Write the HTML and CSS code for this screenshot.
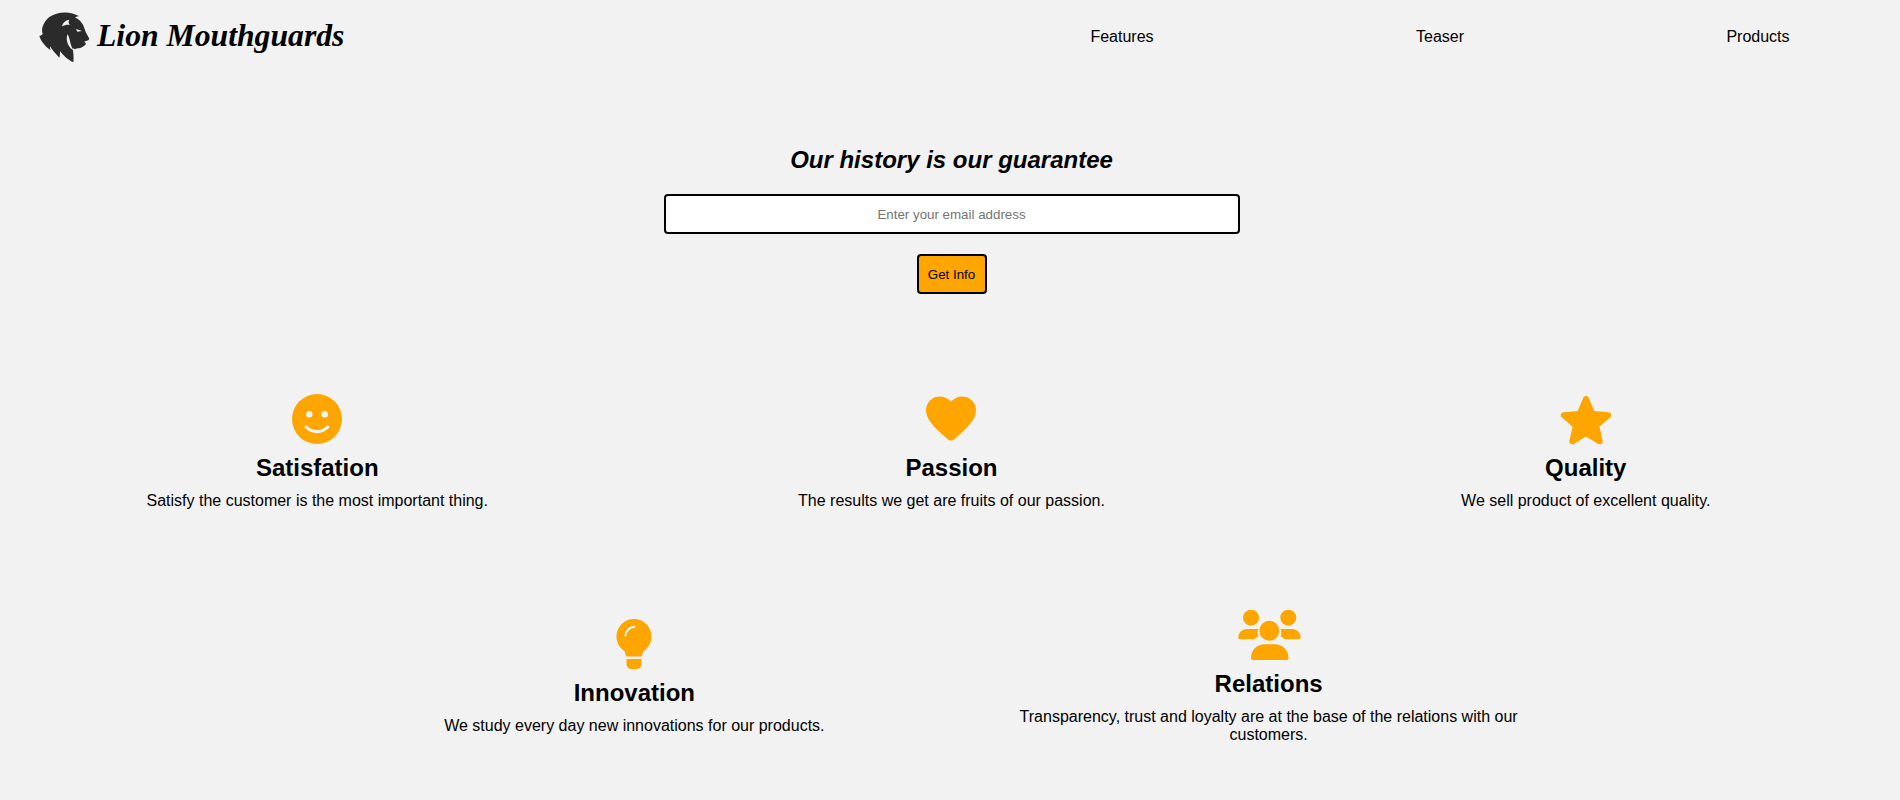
FILE: index.html
```html
<!DOCTYPE html>
<html lang="en">
<head>
    <meta charset="UTF-8">
    <title>Lion Mouthguards</title>
    <link rel="stylesheet" href="styles.css">
</head>
<body>
<header class="header">
    <a class="logo" href="#">
        <svg class="logo_img" viewBox="0 0 210 180">
            <path fill="#2b2b2b" d="M58 36C80 20 120 16 148 34C140 34 137 36 136 38C150 44 160 56 164 72C166 82 174 92 178 102C174 108 168 108 162 110C166 112 168 116 168 118C160 124 156 130 142 130C136 134 132 132 128 128C130 142 132 158 130 172C116 166 100 152 90 138C90 146 90 152 88 158C76 146 66 134 60 124C60 128 60 132 62 136C46 124 32 108 28 92C32 92 36 90 38 86C32 70 42 50 58 36Z"/>
            <path fill="#f2f2f2" d="M96 64C98 54 106 46 118 44C114 50 116 56 120 60C112 58 104 60 96 64Z"/>
            <path fill="#f2f2f2" d="M112 88C122 100 118 120 132 138C116 128 106 110 112 88Z"/>
            <path fill="#f2f2f2" d="M138 72L156 78L142 80Z"/>
        </svg>
        <span class="logo_text">Lion Mouthguards</span>
    </a>
    <ul class="nav">
        <li><a href="#features">Features</a></li>
        <li><a href="#teaser">Teaser</a></li>
        <li><a href="#products">Products</a></li>
    </ul>
</header>

<!--email form-->
<section class="hero">
    <h1>Our history is our guarantee</h1>
    <input class="email" type="email" placeholder="Enter your email address">
    <button class="btn" type="button">Get Info</button>
</section>

<!--features-->
<section class="features">
    <div class="feature">
        <svg class="icon" viewBox="0 0 24 24">
            <circle cx="12" cy="12" r="10" fill="#ffa500"/>
            <circle cx="8.900" cy="10.100" r="1.300" fill="#f2f2f2"/>
            <circle cx="15.100" cy="10.100" r="1.300" fill="#f2f2f2"/>
            <path d="M7.700 15.200c2.300 2.400 6.300 2.400 8.600 0" fill="none" stroke="#f2f2f2" stroke-width="1.300" stroke-linecap="round"/>
        </svg>
        <h2>Satisfation</h2>
        <p>Satisfy the customer is the most important thing.</p>
    </div>
    <div class="feature">
        <svg class="icon" viewBox="0 0 24 24">
            <path fill="#ffa500" d="M13.35 20.13c-.76.69-1.93.69-2.69-.01l-.11-.1C5.3 15.27 1.87 12.16 2 8.28c.06-1.7.93-3.33 2.34-4.29 2.64-1.8 5.9-.96 7.66 1.1 1.76-2.06 5.02-2.91 7.66-1.1 1.41.96 2.28 2.59 2.34 4.29.14 3.88-3.3 6.99-8.55 11.76l-.1.09z"/>
        </svg>
        <h2>Passion</h2>
        <p>The results we get are fruits of our passion.</p>
    </div>
    <div class="feature">
        <svg class="icon" viewBox="1.85 1.2 20.3 20.3">
            <path fill="#ffa500" d="M12 17.27l4.15 2.51c.76.46 1.69-.22 1.49-1.08l-1.1-4.72 3.67-3.18c.67-.58.31-1.68-.57-1.75l-4.83-.41-1.89-4.46c-.34-.81-1.5-.81-1.84 0L9.19 8.63l-4.83.41c-.88.07-1.24 1.17-.57 1.75l3.67 3.18-1.1 4.72c-.2.86.73 1.54 1.49 1.08l4.15-2.5z"/>
        </svg>
        <h2>Quality</h2>
        <p>We sell product of excellent quality.</p>
    </div>
    <div class="feature">
        <svg class="icon" viewBox="0 0 24 24">
            <path fill="#ffa500" d="M12 2C8.100 2 5 5.100 5 9c0 2.400 1.200 4.400 3 5.700.4.300.7 1.300.8 2.300h6.400c.1-1 .4-2 .8-2.300 1.800-1.300 3-3.300 3-5.700 0-3.900-3.100-7-7-7zM9 18h6v2c0 1.100-.9 2-2 2h-2c-1.100 0-2-.9-2-2z"/>
            <path d="M8.600 8.600c.1-1.900 1.700-3.400 3.600-3.500" fill="none" stroke="#f2f2f2" stroke-width=".8" stroke-linecap="round"/>
        </svg>
        <h2>Innovation</h2>
        <p>We study every day new innovations for our products.</p>
    </div>
    <div class="feature">
        <svg class="icon icon_wide" viewBox="-1 -3 66 60">
            <circle cx="14" cy="9.700" r="8" fill="#ffa500"/>
            <circle cx="51.300" cy="9.700" r="8" fill="#ffa500"/>
            <path fill="#ffa500" d="M3 31.300c-1 0-1.700-.7-1.700-1.700 0-5 3.700-8.600 8.700-8.600h11.500c-1 2-1 6 0 7.500-2 .6-3.200 1.500-4.300 2.800z"/>
            <path fill="#ffa500" d="M62 31.300c1 0 1.700-.7 1.700-1.700 0-5-3.700-8.600-8.700-8.600H43.500c1 2 1 6 0 7.500 2 .6 3.200 1.500 4.300 2.800z"/>
            <circle cx="32.300" cy="22.700" r="10" fill="#ffa500"/>
            <path fill="#ffa500" d="M16 52c-1.200 0-2-.8-2-2 0-8 6-13.700 13.500-13.700h10c8 0 14 5.700 14 13.700 0 1.200-.8 2-2 2z"/>
        </svg>
        <h2>Relations</h2>
        <p>Transparency, trust and loyalty are at the base of the relations with our customers.</p>
    </div>
</section>
</body>
</html>
```

FILE: styles.css
```css
*{
    margin: 0;
    padding: 0;
    box-sizing: border-box;
}
body{
    overflow-x: hidden;
    background-color: #f2f2f2;
    color: #000;
    font-family: "Liberation Sans", Arial, sans-serif;
    font-size: 16px;
}
a{
    text-decoration: none;
    color: #000;
}
.header{
    display: flex;
    align-items: center;
    justify-content: space-between;
    height: 72px;
    padding: 0 92px 0 30px;
}
.logo{
    display: flex;
    align-items: center;
}
.logo_img{
    width: 70px;
    height: 60px;
    margin-top: -2px;
}
.logo_text{
    margin-left: -3px;
    font-family: "Liberation Serif", serif;
    font-style: italic;
    font-weight: bold;
    font-size: 31.7px;
}
.nav{
    display: flex;
    gap: 218px;
    list-style: none;
    padding-top: 1px;
}
.nav li{
    width: 100px;
    text-align: center;
}
.hero{
    display: flex;
    flex-direction: column;
    align-items: center;
    padding: 74px 0 0 3px;
}
.hero h1{
    font-size: 24px;
    font-style: italic;
    line-height: 28px;
}
.email{
    width: 576px;
    height: 40px;
    margin-top: 20px;
    border: 2px solid #000;
    border-radius: 4px;
    background-color: #fff;
    text-align: center;
    font-family: "Liberation Sans", Arial, sans-serif;
    font-size: 13.33px;
}
.btn{
    width: 70px;
    height: 40px;
    margin-top: 20px;
    border: 2px solid #000;
    border-radius: 4px;
    background-color: #ffa500;
    font-family: "Liberation Sans", Arial, sans-serif;
    font-size: 13.33px;
}
.features{
    display: flex;
    flex-wrap: wrap;
    justify-content: center;
    align-items: center;
    row-gap: 95px;
    margin: 95px -3px 0 0;
}
.feature{
    display: flex;
    flex-direction: column;
    align-items: center;
    width: 33.33%;
    text-align: center;
}
.icon{
    width: 60px;
    height: 60px;
}
.icon_wide{
    width: 66px;
}
.feature h2{
    margin-top: 5px;
    font-size: 24px;
    line-height: 28px;
}
.feature p{
    max-width: 510px;
    margin-top: 10px;
    line-height: 18px;
}
```
